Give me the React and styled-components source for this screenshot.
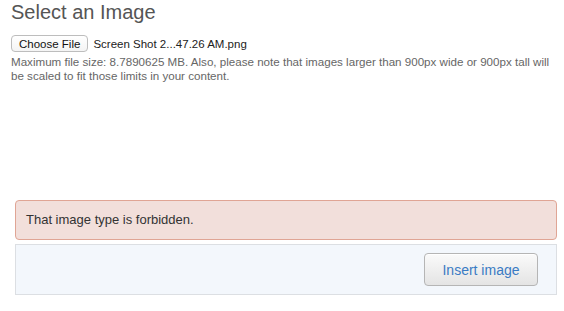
import React from 'react'
import styled, { createGlobalStyle } from 'styled-components'

const GlobalStyle = createGlobalStyle`
	body {
		margin: 0;
		background: #fff;
		font-family: 'Liberation Sans', Arial, sans-serif;
	}
`

const Page = styled('div')`
	width: 564px;
	height: 311px;
	overflow: hidden;
	display: flex;
	flex-direction: column;
`

const Upload = styled('section')`
	padding: 0 11px;
	height: 200px;
	box-sizing: border-box;
`

const Title = styled('h2')`
	margin: 0;
	font-size: 20px;
	line-height: 24px;
	font-weight: normal;
	color: #555;
`

const FileRow = styled('div')`
	display: flex;
	align-items: center;
	gap: 5px;
	margin-top: 11px;
	font-size: 11.5px;
	color: #222;
`

const ChooseButton = styled('button')`
	height: 17px;
	padding: 0 7px;
	font-family: inherit;
	font-size: 11.5px;
	color: #111;
	background: linear-gradient(#ffffff, #f4f4f4);
	border: 1px solid #bdbdbd;
	border-radius: 4px;
`

const Hint = styled('p')`
	margin: 3px 0 0;
	font-size: 11.6px;
	line-height: 14px;
	color: #666;
`

const Bottom = styled('div')`
	display: flex;
	flex-direction: column;
	gap: 4px;
	margin: 0 7px 0 15px;
`

const Alert = styled('div')`
	height: 40px;
	box-sizing: border-box;
	padding: 11px 10px 0;
	font-size: 13px;
	color: #333;
	background: #f2dfdb;
	border: 1px solid #e0a595;
	border-radius: 4px;
`

const Footer = styled('div')`
	height: 51px;
	box-sizing: border-box;
	display: flex;
	justify-content: flex-end;
	align-items: center;
	padding: 0 18px 0 0;
	background: #f3f7fc;
	border: 1px solid #dcdfe3;
`

const InsertButton = styled('button')`
	width: 114px;
	height: 33px;
	font-family: inherit;
	font-size: 14px;
	color: #3a7bc4;
	background: linear-gradient(#fafafa, #e4e4e4);
	border: 1px solid #b5b5b5;
	border-radius: 4px;
	box-shadow: inset 0 1px 0 #fff;
`

const App = () => (
	<Page>
		<GlobalStyle />
		<Upload>
			<Title>Select an Image</Title>
			<FileRow>
				<ChooseButton>Choose File</ChooseButton>
				<span>Screen Shot 2...47.26 AM.png</span>
			</FileRow>
			<Hint>
				Maximum file size: 8.7890625 MB. Also, please note that images larger than 900px wide or 900px tall will be scaled to fit those limits in your content.
			</Hint>
		</Upload>
		<Bottom>
			<Alert>That image type is forbidden.</Alert>
			<Footer>
				<InsertButton>Insert image</InsertButton>
			</Footer>
		</Bottom>
	</Page>
)

export default App
